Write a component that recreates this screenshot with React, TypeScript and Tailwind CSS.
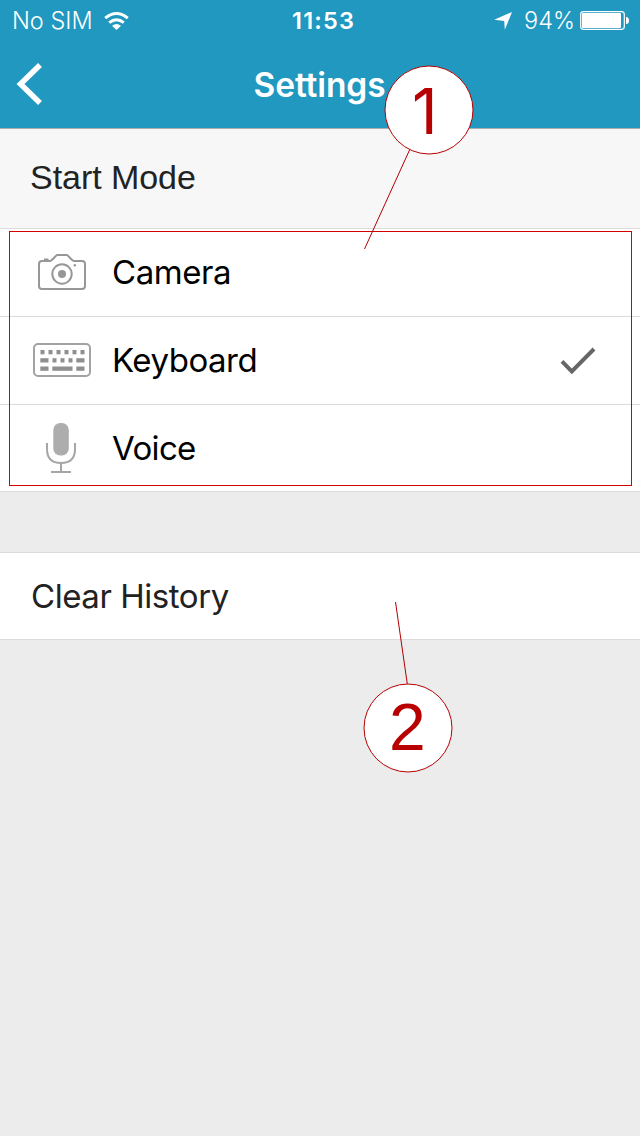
import React from "react";

type RowProps = { icon: React.ReactNode; label: string; labelClass: string; checked?: boolean; className: string };

function CameraIcon() {
  return (
    <svg width="58" height="52" viewBox="33 247 58 52" fill="none" stroke="#979797" strokeWidth="2">
      <path d="M42 261h8c2 0 6-6 7-6h10c1 0 5 6 7 6h8q3 0 3 3v22q0 3-3 3h-40q-3 0-3-3v-22q0-3 3-3z" />
      <circle cx="62" cy="274" r="9.7" />
      <circle cx="62" cy="274" r="4" fill="#979797" stroke="none" />
      <path d="M44 259.5h4.5" />
      <circle cx="74.8" cy="265.3" r="1.2" fill="#979797" stroke="none" />
    </svg>
  );
}

function KeyboardIcon() {
  return (
    <svg width="58" height="52" viewBox="33 336 58 52" fill="#8f8f8f">
      <rect x="34" y="345" width="56" height="32" rx="4" fill="none" stroke="#a3a3a3" strokeWidth="2" />
      {[40.5, 48.5, 56.5, 64.5, 72.5, 80.5].map((x) => (
        <rect key={x} x={x} y="351" width="4" height="4.3" />
      ))}
      <rect x="40.3" y="359.2" width="8.2" height="4.3" />
      {[52.5, 60.5, 68.5].map((x) => (
        <rect key={x} x={x} y="359.2" width="4" height="4.3" />
      ))}
      <rect x="76.3" y="359.2" width="8.2" height="4.3" />
      <rect x="40.3" y="367.5" width="8.2" height="4.3" />
      <rect x="52.3" y="367.5" width="20.2" height="4.3" />
      <rect x="76.3" y="367.5" width="8.2" height="4.3" />
    </svg>
  );
}

function MicIcon() {
  return (
    <svg width="58" height="52" viewBox="33 422 58 52" fill="none" stroke="#a6a6a6" strokeWidth="2">
      <rect x="53.3" y="423" width="15.5" height="32.5" rx="7" fill="#adadad" stroke="none" />
      <path d="M47 443v6q0 14 14 14t14-14v-6M61 463v8M51 472h20" />
    </svg>
  );
}

function Row({ icon, label, labelClass, checked, className }: RowProps) {
  return (
    <div className={`flex items-center bg-white pl-[33px] pr-[44px] ${className}`}>
      <span className="w-[58px] shrink-0">{icon}</span>
      <span className={`ml-[21px] grow text-[33px] leading-none text-black ${labelClass}`}>{label}</span>
      {checked && (
        <svg width="36" height="30" viewBox="560 346 36 30" fill="none" stroke="#666" strokeWidth="4">
          <path d="M562 361.3l9.8 10L594 349" />
        </svg>
      )}
    </div>
  );
}

export default function App() {
  return (
    <div className="relative h-[1136px] w-[640px] overflow-hidden bg-[#ececec] font-['Inter',sans-serif]">
      <header className="flex h-[129px] flex-col border-b border-[#a9adaf] bg-[#2098bf] text-white">
        <div className="grid h-10 grid-cols-[1fr_auto_1fr] items-center pl-3 pr-[10px] pt-px text-[23.5px] leading-none">
          <div className="flex items-center gap-3">
            <span className="w-[80px] whitespace-nowrap pt-px font-light">No SIM</span>
            <svg width="26" height="20" viewBox="104 10 26 20" fill="none" stroke="white" strokeWidth="3">
              <path d="M105.2 17.2q11.3-9.3 22.6 0M109.2 21.7q7.3-6 14.6 0" />
              <path d="M112 24.8q4.5-3.8 9 0l-4.5 4.2z" fill="white" stroke="none" />
            </svg>
          </div>
          <span className="w-[58px] whitespace-nowrap pt-px font-semibold tracking-[1.2px]">11:53</span>
          <div className="flex items-center justify-end">
            <svg width="19" height="19" viewBox="494 11 19 19" fill="white">
              <path d="M512 12l-7.2 17.8-.6-8.8-10-1.3z" />
            </svg>
            <span className="ml-[11px] w-[50px] whitespace-nowrap pt-px font-light">94%</span>
            <svg className="ml-[6px]" width="50" height="20" viewBox="580 11 50 20">
              <rect x="580.7" y="11.7" width="43.6" height="17.6" rx="2.8" fill="none" stroke="white" strokeWidth="1.2" />
              <rect x="582" y="13" width="39" height="15" rx="1" fill="white" />
              <path d="M626 17q3 0 3 3.5t-3 3.5z" fill="white" />
            </svg>
          </div>
        </div>
        <div className="grid h-[88px] grid-cols-[1fr_auto_1fr] items-center px-4">
          <svg width="28" height="44" viewBox="16 62 28 44" fill="none" stroke="white" strokeWidth="5.5">
            <path d="M40 65L20.5 84 40 103" />
          </svg>
          <h1 className="pr-px pt-[3px] text-[33.5px] font-semibold leading-none tracking-[-0.1px]">Settings</h1>
        </div>
      </header>
      <h2 className="flex h-[100px] items-center border-b border-[#dcdcdc] bg-[#f7f7f7] pb-[3px] pl-[30px] font-['Liberation_Sans',sans-serif] text-[34px] leading-none tracking-[-0.05px] text-[#222]">
        Start Mode
      </h2>
      <Row icon={<CameraIcon />} label="Camera" labelClass="tracking-[-0.45px]" className="h-[88px] border-b border-[#dcdcdc]" />
      <Row icon={<KeyboardIcon />} label="Keyboard" labelClass="tracking-[-0.5px]" checked className="h-[88px] border-b border-[#dcdcdc]" />
      <Row icon={<MicIcon />} label="Voice" labelClass="pt-px tracking-[-0.65px]" className="h-[87px] border-b border-[#dcdcdc]" />
      <div className="h-[60px]" />
      <div className="flex h-[88px] items-center border-y border-[#dcdcdc] bg-white pl-[31px] pt-px text-[33px] leading-none tracking-[-0.45px] text-[#222]">
        <span>Clear History</span>
      </div>

      <div className="absolute left-[9px] top-[231px] h-[255px] w-[623px] border border-[#d40000]" />
      <svg className="absolute left-0 top-0" width="640" height="1136" fill="none" stroke="#b40000">
        <path d="M410 149L364.5 249M407.3 684L395.5 602" />
        <circle cx="429" cy="110" r="44" fill="white" />
        <circle cx="408" cy="728" r="44" fill="white" />
      </svg>
      <span className="absolute left-[412px] top-[80px] text-[63px] leading-none text-[#b80000]">1</span>
      <span className="absolute left-[389px] top-[694px] font-['Liberation_Sans',sans-serif] text-[66px] leading-none text-[#b80000]">2</span>
    </div>
  );
}
